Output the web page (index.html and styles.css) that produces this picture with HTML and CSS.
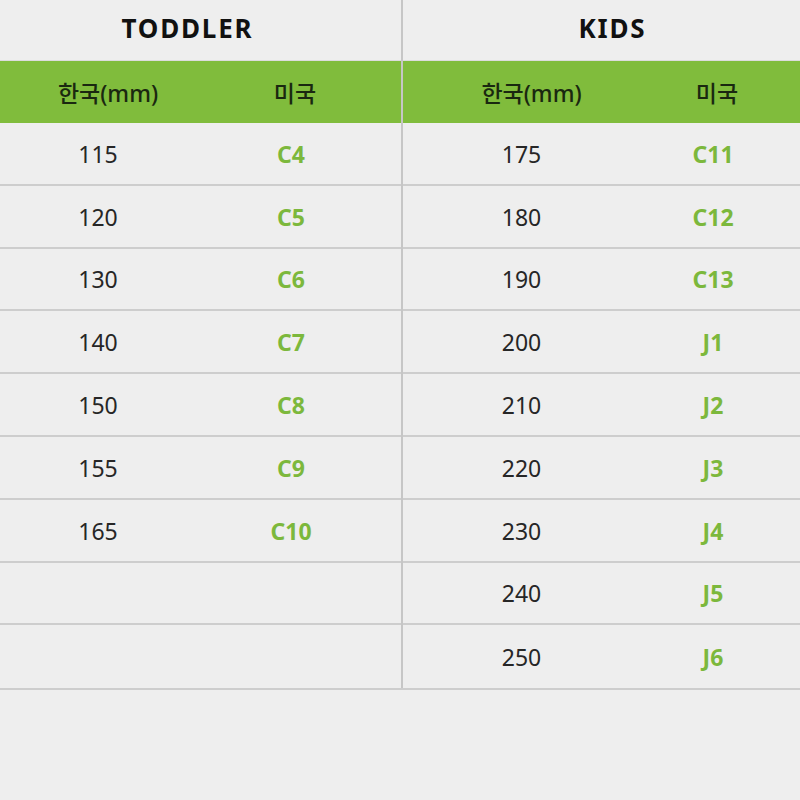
FILE: index.html
```html
<!DOCTYPE html>
<html lang="ko">
<head>
<meta charset="utf-8">
<link rel="stylesheet" href="styles.css">
</head>
<body>
<div class="page">
  <section class="half left">
    <div class="title">TODDLER</div>
    <div class="grid">
      <div class="hd c1">한국(mm)</div><div class="hd c2">미국</div><div class="hd"></div>
      <div class="cell c1">115</div><div class="cell c2 us">C4</div><div class="cell"></div>
      <div class="cell c1">120</div><div class="cell c2 us">C5</div><div class="cell"></div>
      <div class="cell c1">130</div><div class="cell c2 us">C6</div><div class="cell"></div>
      <div class="cell c1">140</div><div class="cell c2 us">C7</div><div class="cell"></div>
      <div class="cell c1">150</div><div class="cell c2 us">C8</div><div class="cell"></div>
      <div class="cell c1">155</div><div class="cell c2 us">C9</div><div class="cell"></div>
      <div class="cell c1">165</div><div class="cell c2 us">C10</div><div class="cell"></div>
      <div class="cell c1"></div><div class="cell c2 us"></div><div class="cell"></div>
      <div class="cell c1"></div><div class="cell c2 us"></div><div class="cell"></div>
    </div>
  </section>
  <section class="half right">
    <div class="title">KIDS</div>
    <div class="grid">
      <div class="hd c1">한국(mm)</div><div class="hd c2">미국</div><div class="hd"></div>
      <div class="cell c1">175</div><div class="cell c2 us">C11</div><div class="cell"></div>
      <div class="cell c1">180</div><div class="cell c2 us">C12</div><div class="cell"></div>
      <div class="cell c1">190</div><div class="cell c2 us">C13</div><div class="cell"></div>
      <div class="cell c1">200</div><div class="cell c2 us">J1</div><div class="cell"></div>
      <div class="cell c1">210</div><div class="cell c2 us">J2</div><div class="cell"></div>
      <div class="cell c1">220</div><div class="cell c2 us">J3</div><div class="cell"></div>
      <div class="cell c1">230</div><div class="cell c2 us">J4</div><div class="cell"></div>
      <div class="cell c1">240</div><div class="cell c2 us">J5</div><div class="cell"></div>
      <div class="cell c1">250</div><div class="cell c2 us">J6</div><div class="cell"></div>
    </div>
  </section>
</div>
</body>
</html>
```

FILE: styles.css
```css
* { box-sizing: border-box; }
html, body {
  margin: 0;
  padding: 0;
  background: #eeeeee;
}
body {
  width: 800px;
  height: 800px;
  overflow: hidden;
  font-family: "Noto Sans", "Noto Sans CJK KR", sans-serif;
  color: #262626;
}
.page {
  display: flex;
  align-items: flex-start;
  border-bottom: 2px solid #cdcdcd;
  width: 800px;
}
.half { display: flex; flex-direction: column; }
.left { width: 401px; }
.right { width: 399px; border-left: 2px solid #c6c6c6; }
.title {
  height: 61px;
  display: flex;
  align-items: center;
  justify-content: center;
  font-weight: 700;
  font-size: 26px;
  letter-spacing: 1.8px;
  color: #111111;
  border-bottom: 1px solid #dcdcdc;
  padding-bottom: 4px;
}
.left .title { padding-right: 26px; }
.right .title { padding-left: 22px; }
.grid { display: grid; }
.left .grid { grid-template-columns: 196px 190px 1fr; }
.right .grid { grid-template-columns: 237px 146px 1fr; }
.hd {
  height: 62px;
  background: #80bc3c;
  display: flex;
  align-items: center;
  justify-content: center;
  font-size: 23px;
  font-weight: 500;
  color: #1a2810;
}
.hd.c1 { padding-left: 20px; }
.hd.c2 { padding-left: 8px; }
.cell {
  height: 62.8px;
  display: flex;
  align-items: center;
  justify-content: center;
  font-size: 23px;
  border-bottom: 2px solid #cdcdcd;
  padding-top: 1px;
}
.grid .cell:nth-last-child(-n+3) { border-bottom: none; }
.us {
  color: #7cb83c;
  font-weight: 700;
}
```
